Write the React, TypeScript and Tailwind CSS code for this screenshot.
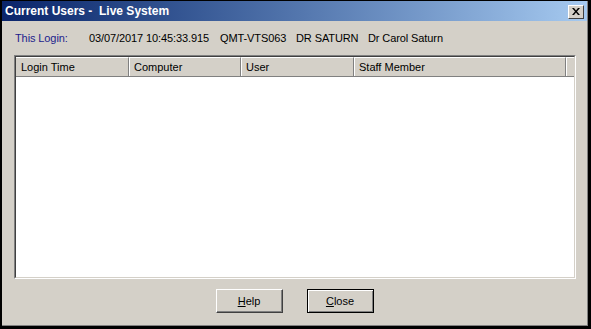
const UI = { fontFamily: "'Liberation Sans', Arial, sans-serif" };

const columns = [
  { label: "Login Time", w: "w-[113px]" },
  { label: "Computer", w: "w-[112px]" },
  { label: "User", w: "w-[113px]" },
  { label: "Staff Member", w: "w-[212px]" },
];

export default function App() {
  return (
    <div className="w-[591px] h-[329px] bg-black pl-[2px] pr-[3px] pt-[1px] pb-[3px]" style={UI}>
      <div className="h-full flex flex-col bg-[#d4d0c8] border-r border-b border-[#808080]">
        {/* Title bar */}
        <div className="h-[20px] flex items-center justify-between pl-[3px] pr-[3px] bg-gradient-to-r from-[#0a246a] to-[#a6caf0]">
          <span className="text-white font-bold text-[12px] leading-none">
            Current Users -&nbsp; Live System
          </span>
          <button className="w-[16px] h-[14px] mt-[1px] bg-[#d4d0c8] border border-t-white border-l-white border-r-[#404040] border-b-[#404040] flex items-center justify-center">
            <svg width="8" height="7" viewBox="0 0 8 7">
              <path d="M0 0h2l2 2.5L6 0h2L5 3.5 8 7H6L4 4.5 2 7H0l3-3.5z" fill="black" />
            </svg>
          </button>
        </div>

        {/* This login */}
        <div className="flex items-center h-[34px] pl-[13px] text-[11px] text-black tracking-[-0.1px]">
          <span className="w-[74px] text-[#1c1c8c]">This Login:</span>
          <span className="w-[131px]">03/07/2017 10:45:33.915</span>
          <span className="w-[76px]">QMT-VTS063</span>
          <span className="w-[72px]">DR SATURN</span>
          <span>Dr Carol Saturn</span>
        </div>

        {/* List view */}
        <div className="ml-[12px] mr-[11px] h-[224px] border border-t-[#808080] border-l-[#808080] border-r-white border-b-white">
          <div className="h-full border border-t-[#404040] border-l-[#404040] border-r-[#d4d0c8] border-b-[#d4d0c8] bg-white flex flex-col">
            <div className="h-[20px] flex bg-[#d4d0c8] border-b border-[#808080] text-[11px] text-black">
              {columns.map((c) => (
                <div
                  key={c.label}
                  className={`${c.w} h-full flex items-center pl-[5px] border-t border-t-white border-r border-r-[#808080] shadow-[1px_0_0_white]`}
                >
                  {c.label}
                </div>
              ))}
              <div className="flex-1 border-t border-t-white" />
            </div>
          </div>
        </div>

        {/* Buttons */}
        <div className="flex justify-center gap-[24px] pt-[10px]">
          <button className="w-[67px] h-[24px] text-[11px] text-black bg-[#d4d0c8] border border-t-white border-l-white border-r-[#404040] border-b-[#404040] shadow-[inset_-1px_-1px_0_#808080]">
            <span className="underline">H</span>elp
          </button>
          <button className="w-[67px] h-[24px] text-[11px] text-black bg-[#d4d0c8] border border-black shadow-[inset_1px_1px_0_white,inset_-1px_-1px_0_#808080]">
            <span className="underline">C</span>lose
          </button>
        </div>
      </div>
    </div>
  );
}
